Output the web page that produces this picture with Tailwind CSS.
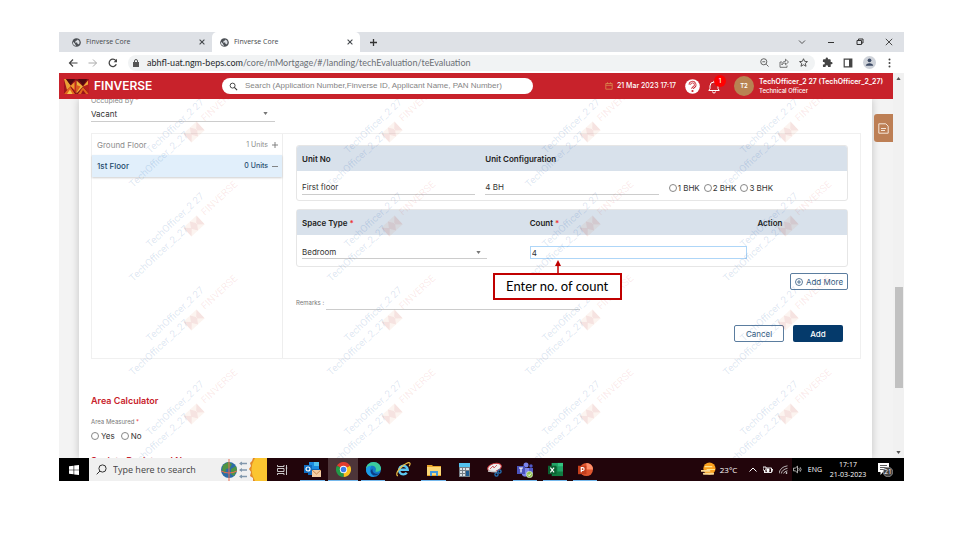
<!DOCTYPE html>
<html lang="en">
<head>
<meta charset="utf-8">
<title>Finverse Core</title>
<script src="https://cdn.jsdelivr.net/npm/@tailwindcss/browser@4"></script>
</head>
<body class="h-screen bg-white pt-8 pb-[59px] pl-[59px] pr-14 overflow-hidden font-['Inter',sans-serif] text-[8px] leading-[10px] text-[#333]">
<svg class="hidden">
  <defs>
    <symbol id="globe" viewBox="0 0 24 24"><circle cx="12" cy="12" r="11.500" fill="#4c5055"/><path d="M3 10l5 5v2l2 1v3A9 9 0 0 1 3 10zM14 4v1l-2 2h-2v2l-2 1v2h6v3h2l2 2 1-1A9 9 0 0 0 14 4z" fill="#dee1e6"/></symbol>
    <symbol id="cross" viewBox="0 0 10 10"><path d="M1 1l8 8M9 1L1 9" stroke="currentColor" fill="none"/></symbol>
    <symbol id="lens" viewBox="0 0 20 20"><circle cx="8" cy="8" r="5.5" fill="none" stroke="currentColor" stroke-width="2"/><path d="M12 12l6 6" stroke="currentColor" stroke-width="2.4"/></symbol>
    <symbol id="caret" viewBox="0 0 6 4"><path d="M0 0h6L3 4z" fill="currentColor"/></symbol>
    <g id="mark">
      <g fill="#1f5fae" fill-opacity=".17" font-family="Roboto" font-size="10">
        <text transform="translate(22 64) rotate(-43)">TechOfficer_2 27</text>
        <text transform="translate(5 98) rotate(-43)">TechOfficer_2_27</text>
      </g>
      <text transform="translate(77 32) rotate(-43)" fill="#d2222b" fill-opacity=".1" font-family="Roboto" font-size="10">FINVERSE</text>
      <g transform="translate(66 42) rotate(-43)" fill-opacity=".07"><path d="M-9-6H9V6H-9z" fill="#d9622b"/><path d="M-9-6l6 6-6 6zM9-6L3 0l6 6zM0-6l4 6-4 6-4-6z" fill="#b01018"/></g>
    </g>
  </defs>
</svg>
<div class="h-full flex flex-col">

  <!-- Browser tabs -->
  <div class="h-5 shrink-0 flex items-center bg-[#dee1e6] font-['Open_Sans',sans-serif] text-[7px] text-[#45494d]">
    <div class="w-[153px] flex items-center gap-[5px] pl-[13px] pr-[7px]">
      <svg class="size-[9px]"><use href="#globe"/></svg><span class="flex-1">Finverse Core</span>
      <button aria-label="Close tab"><svg class="size-[6px] block" stroke-width="1.8"><use href="#cross"/></svg></button>
    </div>
    <div class="w-[148px] h-full flex items-center gap-[5px] pl-2 pr-[7px] bg-white rounded-t-[5px]">
      <svg class="size-[9px]"><use href="#globe"/></svg><span class="flex-1">Finverse Core</span>
      <button aria-label="Close tab"><svg class="size-[6px] block" stroke-width="1.8"><use href="#cross"/></svg></button>
    </div>
    <button aria-label="New tab" class="ml-[9px]"><svg class="size-[9px] block" viewBox="0 0 9 9"><path d="M4.5 1v7M1 4.5h7" stroke="#333" stroke-width="1.3"/></svg></button>
    <div class="ml-auto flex items-center gap-[21px] pr-[11px] text-[#333]">
      <button aria-label="Search tabs"><svg class="size-2 block" viewBox="0 0 8 8"><path d="M1 2.500l3 3 3-3" fill="none" stroke="#444" stroke-width=".9"/></svg></button>
      <button aria-label="Minimize"><svg class="size-2 block" viewBox="0 0 8 8"><path d="M1 4.500h6" stroke="#333"/></svg></button>
      <button aria-label="Restore"><svg class="size-2 block" viewBox="0 0 8 8"><path d="M1 2.500h4.500v4H1zM2.500 2.500v-1.500H7v4H5.500" fill="none" stroke="#333"/></svg></button>
      <button aria-label="Close"><svg class="size-2 block" stroke-width="1.1"><use href="#cross"/></svg></button>
    </div>
  </div>

  <!-- Address bar -->
  <div class="h-[21px] shrink-0 flex items-center bg-white pl-[9px] pr-[11px] text-[#555]">
    <div class="flex items-center gap-[10px]">
      <button aria-label="Back"><svg class="size-[10px] block" viewBox="0 0 10 10"><path d="M9.500 5H1.500M5 1.500L1.500 5 5 8.500" fill="none" stroke="#444" stroke-width="1.200"/></svg></button>
      <button aria-label="Forward"><svg class="size-[10px] block" viewBox="0 0 10 10"><path d="M.5 5h8M5 1.500L8.500 5 5 8.500" fill="none" stroke="#aaa"/></svg></button>
      <button aria-label="Reload"><svg class="size-[10px] block" viewBox="0 0 10 10"><path d="M8.300 6.200A3.700 3.700 0 1 1 7.800 2.600L8.500 3.500" fill="none" stroke="#444" stroke-width="1.300"/><path d="M9 .8v3.400H5.600z" fill="#444"/></svg></button>
    </div>
    <div class="ml-[10px] h-4 flex-1 flex items-center rounded-full bg-[#f1f3f4] pl-[5px] pr-[7px]">
      <svg class="w-[6px] h-2" viewBox="0 0 6 8"><path d="M0 3h6v5H0z" fill="#555"/><path d="M1.500 3V2a1.500 1.500 0 0 1 3 0v1" fill="none" stroke="#555"/></svg>
      <div class="ml-2 flex-1 font-['Lato',sans-serif] text-[9px] text-[#6b6f74]"><span class="text-[#25282c]">abhfl-uat.ngm-beps.com</span>/core/mMortgage/#/landing/techEvaluation/teEvaluation</div>
      <div class="flex items-center gap-[10px]">
        <svg class="size-[9px]" viewBox="0 0 10 10" fill="none" stroke="#555"><circle cx="4.200" cy="4.200" r="3.400"/><path d="M7 7l2.500 2.500M2.600 4.200h3.200"/></svg>
        <svg class="size-[10px]" viewBox="0 0 10 10" fill="none" stroke="#666" stroke-width=".9"><path d="M3 4H1v5.300h7V7.500M2.800 7C3 4.500 4.500 3.300 6.500 3.300V1.200L9.500 4 6.500 6.800V5C5 5 3.700 5.500 2.800 7z"/></svg>
        <svg class="size-[9px]" viewBox="0 0 10 10"><path d="M5 .8l1.300 2.900 3.100.3-2.400 2 .8 3.200L5 7.500 2.200 9.200 3 6 .6 4l3.100-.3z" fill="none" stroke="#444"/></svg>
      </div>
    </div>
    <div class="ml-[7px] flex items-center gap-[10px]">
      <svg class="size-[11px]" viewBox="0 0 24 24"><path d="M20.500 11H19V7a2 2 0 0 0-2-2h-4V3.500a2.500 2.500 0 0 0-5 0V5H4a2 2 0 0 0-2 2v3.800h1.500a2.700 2.700 0 0 1 0 5.400H2V20a2 2 0 0 0 2 2h3.800v-1.500a2.700 2.700 0 0 1 5.400 0V22H17a2 2 0 0 0 2-2v-4h1.500a2.500 2.500 0 0 0 0-5z" fill="#444"/></svg>
      <svg class="size-[10px]" viewBox="0 0 10 10"><path d="M1.200 1.200h7.600v7.600H1.200z" fill="none" stroke="#444" stroke-width="1.200"/><path d="M6 1h3v8H6z" fill="#444"/></svg>
      <svg class="size-[13px]" viewBox="0 0 14 14"><circle cx="7" cy="7" r="7" fill="#ced2d9"/><circle cx="7" cy="4.700" r="2" fill="#3c4a64"/><path d="M3 10.500c0-3.700 8-3.700 8 0z" fill="#3c4a64"/></svg>
      <svg class="w-[7px] h-[10px]" viewBox="0 0 7 10" fill="#444"><circle cx="3.500" cy="1.500" r="1"/><circle cx="3.500" cy="5" r="1"/><circle cx="3.500" cy="8.500" r="1"/></svg>
    </div>
  </div>

  <!-- Page viewport -->
  <div class="flex-1 min-h-0 flex">
    <div class="flex-1 min-w-0 flex flex-col">
      <header class="h-[26px] shrink-0 bg-[#c8222b] flex items-center pl-[5px] pr-[7px] text-white">
        <svg class="w-[25px] h-[15px]" viewBox="0 0 50 30"><path d="M0 0h50v30H0z" fill="#7e0f17"/><path d="M0 0l12 14L0 30z" fill="#a3161c"/><path d="M0 0h4l10 14L6 22z" fill="#e9a136"/><path d="M0 30l12-15 10 15z" fill="#e2661f"/><path d="M6 30l6-9 5 9z" fill="#f6c74f"/><path d="M4 0h18l-9 12z" fill="#4f090f"/><path d="M13 14L24 2v27z" fill="#c4291d"/><path d="M13 14l8-8v16z" fill="#ef9a2f"/><path d="M25 3l13 12-13 14z" fill="#f0b23c"/><path d="M25 12l8 3-8 12z" fill="#dd5a20"/><path d="M28 0h18l-8 13z" fill="#4f090f"/><path d="M28 30l10-14 12 14z" fill="#e2661f"/><path d="M34 30l4-8 6 8z" fill="#9c141a"/><path d="M38 15L50 0v30z" fill="#b8201d"/><path d="M38 15l10-12v8z" fill="#f0a838"/></svg>
        <span class="ml-[5px] w-[128px] text-[12px] font-semibold">FINVERSE</span>
        <div class="w-[311px] h-4 flex items-center rounded-full bg-white pl-[7px]">
          <svg class="size-[9px] text-[#333]"><use href="#lens"/></svg>
          <input aria-label="Search" type="search" placeholder="Search (Application Number,Finverse ID, Applicant Name, PAN Number)" class="ml-[7px] flex-1 min-w-0 outline-none font-['Liberation_Sans',sans-serif] text-[8px] text-[#333] placeholder:text-[#858585]">
        </div>
        <div class="ml-auto flex items-center">
          <svg class="size-2" viewBox="0 0 8 8" fill="none" stroke="#d98e4e" stroke-width=".8"><path d="M.8 1.500h6.400v5.700H.8zM.8 3.300h6.400M2.500.3v1.500M5.500.3v1.500"/></svg>
          <span class="ml-1 w-[68px] text-[7px] font-medium">21 Mar 2023 17:17</span>
          <button aria-label="Help"><svg class="size-[15px] block" viewBox="0 0 15 15"><circle cx="7.500" cy="7.500" r="7.300" fill="#fff"/><path d="M4.800 5.700a2.700 2.700 0 1 1 4 2.400c-.9.500-1.300.9-1.300 2" fill="none" stroke="#c8222b" stroke-width="2.400"/><path d="M4.800 5.700a2.700 2.700 0 1 1 4 2.400c-.9.500-1.300.9-1.300 2" fill="none" stroke="#fff" stroke-width=".9"/><circle cx="7.500" cy="12" r="1.100" fill="#c8222b"/></svg></button>
          <button aria-label="Notifications" class="relative ml-2">
            <svg class="w-3 h-[15px] block" viewBox="0 0 12 15" fill="none" stroke="#fff"><path d="M.8 11.500h10.400L10 9.500V7a4 4 0 0 0-8 0v2.500zM4.500 12.500a1.500 1.500 0 0 0 3 0M6 3V1.800"/></svg>
            <span class="absolute left-[6px] -top-[4px] size-3 rounded-full bg-[#f00] text-[6px] leading-3 text-center font-medium">1</span>
          </button>
          <span class="ml-[14px] size-5 rounded-full bg-[#b88353] text-[6px] leading-5 text-center font-semibold">T2</span>
          <div class="ml-[5px] w-[127px] whitespace-nowrap"><div class="text-[7px] font-semibold leading-[10px]">TechOfficer_2 27 (TechOfficer_2_27)</div><div class="text-[6px] font-medium leading-[8px]">Technical Officer</div></div>
        </div>
      </header>

      <div class="relative flex-1 min-h-0 overflow-hidden bg-[#f3f3f3] pl-5 pr-[21px]">
        <main class="h-full bg-white shadow-[0_0_8px_#0003] pl-3 pr-[11px]">
          <div class="relative -top-[3px]">
            <label for="occ" class="block text-[7px] leading-[10px] text-[#888]">Occupied By <span class="text-[#e33]">*</span></label>
            <div class="w-[184px] h-4 flex items-center border-b border-[#ccc]">
              <select id="occ" class="flex-1 appearance-none outline-none"><option>Vacant</option></select>
              <svg class="w-[5px] h-[3px] mr-[7px] text-[#777]" viewBox="0 0 6 4"><use href="#caret"/></svg>
            </div>
          </div>

          <section class="mt-2 flex border border-[#f0f0f0]">
            <div class="w-[191px] shrink-0 border-r border-[#eee]">
              <button class="w-full h-[21px] flex items-center px-1 pl-[5px] text-[#8d8d8d]"><span class="flex-1 text-left">Ground Floor</span><span class="text-[7px]">1 Units</span><svg class="ml-1 size-[6px]" viewBox="0 0 6 6"><path d="M3 0v6M0 3h6" stroke="#777" stroke-width=".9"/></svg></button>
              <button class="w-full h-[22px] flex items-center px-1 pl-[5px] bg-[#e1effb] shadow-[0_1px_2px_#0003] font-medium text-[#234a6c]"><span class="flex-1 text-left">1st Floor</span><span class="text-[7px]">0 Units</span><svg class="ml-1 size-[6px]" viewBox="0 0 6 6"><path d="M0 3.500h6" stroke="#777" stroke-width=".9"/></svg></button>
            </div>
            <div class="flex-1 min-w-0 pl-[13px] pr-3 pt-[11px] pb-4">
              <div class="border border-[#e6e6e6] rounded-[3px] overflow-hidden">
                <table class="w-full table-fixed">
                  <thead><tr class="h-[25px] bg-[#d8e1eb] text-left"><th class="px-[5px] font-semibold text-[#222]">Unit No</th><th class="px-[5px] font-semibold text-[#222]">Unit Configuration</th><th></th></tr></thead>
                  <tbody><tr class="h-[29px]">
                    <td class="px-[5px] pt-1"><input aria-label="Unit No" value="First floor" class="block w-full h-[14px] outline-none border-b border-[#ccc]"></td>
                    <td class="px-[5px] pt-1"><input aria-label="Unit Configuration" value="4 BH" class="block w-full h-[14px] outline-none border-b border-[#ccc]"></td>
                    <td class="px-[5px] pt-1"><div class="flex gap-1 whitespace-nowrap">
                      <label class="flex items-center gap-px"><input type="radio" name="bhk" class="appearance-none size-2 rounded-full border border-[#888]">1 BHK</label>
                      <label class="flex items-center gap-px"><input type="radio" name="bhk" class="appearance-none size-2 rounded-full border border-[#888]">2 BHK</label>
                      <label class="flex items-center gap-px"><input type="radio" name="bhk" class="appearance-none size-2 rounded-full border border-[#888]">3 BHK</label>
                    </div></td>
                  </tr></tbody>
                </table>
              </div>

              <div class="mt-2 border border-[#e6e6e6] rounded-[3px]">
                <table class="w-full table-fixed">
                  <colgroup><col class="w-[41.4%]"><col class="w-[41.4%]"><col></colgroup>
                  <thead><tr class="h-[25px] bg-[#d8e1eb] text-left"><th class="px-[5px] font-semibold text-[#222]">Space Type <span class="text-[#e33]">*</span></th><th class="px-[5px] font-semibold text-[#222]">Count <span class="text-[#e33]">*</span></th><th class="px-[5px] font-semibold text-[#222]">Action</th></tr></thead>
                  <tbody><tr class="h-[31px]">
                    <td class="px-[5px] pt-1"><div class="w-[185px] h-[13px] flex items-center border-b border-[#ccc]"><select aria-label="Space Type" class="flex-1 appearance-none outline-none"><option>Bedroom</option></select><svg class="w-[5px] h-[3px] mr-[6px] text-[#777]" viewBox="0 0 6 4"><use href="#caret"/></svg></div></td>
                    <td class="px-[5px] pt-1"><div class="relative">
                      <input aria-label="Count" value="4" class="block w-full h-[13px] outline-none border border-[#aed6f8] px-px">
                      <div class="absolute z-10 -left-[37px] top-[14px] w-[129px]">
                        <svg class="block ml-[61px] w-2 h-[14px]" viewBox="0 0 8 14"><path d="M4 4v10" stroke="#c00000" stroke-width="1.500"/><path d="M4 0l3 6H1z" fill="#c00000"/></svg>
                        <div class="-mt-px h-[27px] border-2 border-[#c00000] bg-white text-center whitespace-nowrap font-['Lato',sans-serif] text-[13px] leading-[23px] text-black">Enter no. of count</div>
                      </div>
                    </div></td>
                    <td></td>
                  </tr></tbody>
                </table>
              </div>

              <div class="mt-[6px] flex justify-end"><button class="h-[17px] w-[58px] flex items-center justify-center gap-[3px] whitespace-nowrap border border-[#5b7d9f] rounded-[2px] text-[#345b80]"><svg class="size-2" viewBox="0 0 8 8" fill="none" stroke="#345b80" stroke-width=".8"><circle cx="4" cy="4" r="3.500"/><path d="M4 2v4M2 4h4"/></svg>Add More</button></div>
              <div class="mt-[6px] flex items-center"><label for="remarks" class="w-[30px] text-[6px] text-[#777] whitespace-nowrap">Remarks :</label><input id="remarks" class="w-[254px] h-[14px] outline-none border-b border-[#ccc]"></div>
              <div class="mt-[15px] pr-[5px] flex justify-end gap-[9px]"><button class="w-[50px] h-[17px] border border-[#5b7d9f] rounded-[2px] text-[#345b80]">Cancel</button><button class="w-[50px] h-[17px] rounded-[2px] bg-[#053a6b] text-white font-medium">Add</button></div>
            </div>
          </section>

          <h2 class="mt-9 text-[9px] leading-[11px] font-semibold text-[#c8222b]">Area Calculator</h2>
          <fieldset>
            <legend class="mt-3 text-[6px] leading-[8px] text-[#777] float-left w-full">Area Measured <span class="text-[#e33]">*</span></legend>
            <div class="pt-[5px] clear-both flex gap-[6px]">
              <label class="flex items-center gap-[2px]"><input type="radio" name="area" class="appearance-none size-2 rounded-full border border-[#888]">Yes</label>
              <label class="flex items-center gap-[2px]"><input type="radio" name="area" class="appearance-none size-2 rounded-full border border-[#888]">No</label>
            </div>
          </fieldset>
          <h2 class="mt-[14px] text-[9px] leading-[11px] font-semibold text-[#c8222b]">Society Registered No</h2>
        </main>
        <svg class="absolute inset-0 w-full h-full pointer-events-none" aria-hidden="true">
          <g transform="translate(69 -9)">
            <use href="#mark"/><use href="#mark" x="198"/><use href="#mark" x="396"/><use href="#mark" x="594"/>
            <use href="#mark" y="94"/><use href="#mark" x="198" y="94"/><use href="#mark" x="396" y="94"/><use href="#mark" x="594" y="94"/>
            <use href="#mark" y="188"/><use href="#mark" x="198" y="188"/><use href="#mark" x="396" y="188"/><use href="#mark" x="594" y="188"/>
            <use href="#mark" y="282"/><use href="#mark" x="198" y="282"/><use href="#mark" x="396" y="282"/><use href="#mark" x="594" y="282"/>
          </g>
        </svg>
        <button aria-label="Notes" class="absolute right-0 top-[15px] w-[19px] h-7 rounded-l-[3px] bg-[#bd7f55] flex items-center justify-center"><svg class="size-[11px]" viewBox="0 0 11 11" fill="none" stroke="#f5e6da"><path d="M.8.8h7l2.400 2.400v7H.8zM3 5.500h5M3 7.500h4"/></svg></button>
      </div>
    </div>
    <div class="w-[11px] shrink-0 bg-[#f1f1f1] flex flex-col items-center py-1 text-[#555]">
      <svg class="w-[5px] h-[3px] rotate-180 shrink-0" viewBox="0 0 6 4"><use href="#caret"/></svg>
      <div class="w-2 grow-[207]"></div><div class="w-2 grow-[101] bg-[#c1c1c1]"></div><div class="w-2 grow-[63]"></div>
      <svg class="w-[5px] h-[3px] shrink-0" viewBox="0 0 6 4"><use href="#caret"/></svg>
    </div>
  </div>

  <!-- Taskbar -->
  <footer class="h-[23px] shrink-0 flex bg-[#22050b] text-white font-['Open_Sans',sans-serif]">
    <button aria-label="Start" class="w-[30px] bg-black flex items-center justify-center"><svg class="size-[10px]" viewBox="0 0 10 10"><path d="M0 1.300L4.600.7v4H0zM5.200.6L10 0v4.700H5.200zM0 5.300h4.600v4L0 8.700zM5.200 5.300H10V10l-4.800-.6z" fill="#fff"/></svg></button>
    <div class="w-[178px] bg-[#f0f0f0] flex items-center pl-[7px]">
      <svg class="size-[11px] text-[#333]" viewBox="0 0 11 11" fill="none" stroke="currentColor"><circle cx="6.500" cy="4.500" r="3.600"/><path d="M4 7L.7 10.300"/></svg>
      <input aria-label="Type here to search" placeholder="Type here to search" class="ml-[6px] w-[106px] outline-none text-[9px] placeholder:text-[#444]">
      <svg class="w-[48px] h-[23px]" viewBox="0 0 48 23"><circle cx="10" cy="12" r="8" fill="#2b6ca8"/><path d="M4 7l5-3 4 2-2 4-4 1-1 5-3-4zM12 11l5-3 1 4-3 6-3-2z" fill="#4f9443"/><path d="M10 1v22M2 13q8 4 16 0" stroke="#e86d53" fill="none"/><path d="M21 5.500h7M21 12h7M21 18.500h7" stroke="#8298ad" stroke-width="1.300"/><path d="M20 5.500l3-2v4zM20 12l3-2v4zM20 18.500l3-2v4z" fill="#8298ad"/><path d="M48 0H34l-1 3-2 2 1 3-2 3 2 3-1 4 3 2v3h14z" fill="#e2892a"/><path d="M48 0H36q-7 11 0 23h12z" fill="#fbc531"/></svg>
    </div>
    <nav class="flex">
      <button aria-label="Task view" class="w-[30px] flex items-center justify-center"><svg class="w-[11px] h-[10px]" viewBox="0 0 11 10" fill="none" stroke="#ddd" stroke-width=".9"><path d="M.5 0v1.500h6.500V0M.5 10V8.500H7V10M.5 3.500H7v3H.5zM9.500 0v10M8.700 3h1.600"/></svg></button>
      <button aria-label="Outlook" class="w-[31px] flex items-center justify-center relative"><svg class="size-[17px]" viewBox="0 0 17 17"><path d="M5 1h10v8H5z" fill="#1b8be0"/><path d="M10 1h5v4h-5z" fill="#50c3f0"/><path d="M4 8h12v6H4z" fill="#1066b5"/><path d="M0 4h8v8H0z" fill="#0f6cc0"/><circle cx="4" cy="8" r="2" fill="none" stroke="#fff" stroke-width="1.200"/><path d="M8 9h9v7H8z" fill="#f4cfa4"/><path d="M8 9l4.500 4L17 9" fill="none" stroke="#ca8d50"/></svg><i class="absolute bottom-0 inset-x-[3px] h-px bg-[#76b9ed]"></i></button>
      <button aria-label="Chrome" class="w-[30px] flex items-center justify-center relative bg-[#4d3539]"><svg class="size-[15px]" viewBox="0 0 16 16"><path d="M8 8L1.070 4A8 8 0 0 1 14.930 4z" fill="#e33b2e"/><path d="M8 8l6.930-4A8 8 0 0 1 8 16z" fill="#fcc31e"/><path d="M8 8v8A8 8 0 0 1 1.070 4z" fill="#229a48"/><circle cx="8" cy="8" r="3.900" fill="#fff"/><circle cx="8" cy="8" r="3" fill="#3b7ded"/></svg><i class="absolute bottom-0 inset-x-0 h-px bg-[#76b9ed]"></i></button>
      <button aria-label="Edge" class="w-[30px] flex items-center justify-center relative"><svg class="size-[15px]" viewBox="0 0 16 16"><circle cx="8" cy="8" r="8" fill="#147bc9"/><path d="M0 8C0 3 4 0 8 0c5 0 8 3.500 8 7 0 3-4 4-6 3 2-4-1-6-4-6-3 0-5 2-6 4z" fill="#3ccb9c"/><path d="M0 8C1 5 3 4 6 4c-3 3-2 9 3 12C4 16 0 13 0 8z" fill="#1b9be6"/><path d="M7 7c-1 4 3 7 7 5-3 4-9 2-9-2 0-1 1-2 2-3z" fill="#0d3d82"/></svg><i class="absolute bottom-0 inset-x-[3px] h-px bg-[#76b9ed]"></i></button>
      <button aria-label="Internet Explorer" class="w-[30px] flex items-center justify-center"><svg class="size-[15px]" viewBox="0 0 16 16" fill="none"><path d="M3.500 8.300h9A4.600 4.600 0 1 0 11.500 11.500" stroke="#5dc8f2" stroke-width="2.600"/><path d="M2 15C-2 13 5 4 11 1.500c4-2 5 0 3 3" stroke="#f5c445" stroke-width="1.200"/></svg></button>
      <button aria-label="File Explorer" class="w-[31px] flex items-center justify-center relative"><svg class="w-[14px] h-3" viewBox="0 0 14 12"><path d="M0 1h5l1 1h8v10H0z" fill="#e8a52a"/><path d="M0 3h14v8H0z" fill="#fcd875"/><path d="M3 12V7h8v5H9V9H5v3z" fill="#4598dc"/></svg><i class="absolute bottom-0 inset-x-[3px] h-px bg-[#76b9ed]"></i></button>
      <button aria-label="Calculator" class="w-[30px] flex items-center justify-center"><svg class="w-[11px] h-[14px]" viewBox="0 0 11 14"><path d="M0 0h11v14H0z" fill="#777f86"/><path d="M0 0h11v4H0z" fill="#53c2ee"/><path d="M1 5h2v2H1zM4 5h2v2H4zM7 5h3v2H7zM1 8h2v2H1zM4 8h2v2H4zM1 11h2v2H1zM4 11h2v2H4z" fill="#dce2e6"/><path d="M7 8h3v5H7z" fill="#1e5b91"/></svg></button>
      <button aria-label="Snipping Tool" class="w-[31px] flex items-center justify-center"><svg class="size-[15px]" viewBox="0 0 15 15"><ellipse cx="7.500" cy="5.500" rx="7" ry="4" transform="rotate(-15 7.500 5.500)" fill="#eee" stroke="#c9363b"/><path d="M3 7l3-3 1 2 3-3" fill="none" stroke="#d06064"/><path d="M1 9l9 1" stroke="#ccc" stroke-width="1.500"/><g fill="none" stroke="#2474b8" stroke-width="1.300"><circle cx="9.500" cy="12.500" r="1.600"/><circle cx="12.500" cy="9.500" r="1.600"/></g></svg></button>
      <button aria-label="Teams" class="w-[30px] flex items-center justify-center relative"><svg class="size-4" viewBox="0 0 16 16"><circle cx="9" cy="3" r="2.500" fill="#7b83eb"/><circle cx="14" cy="4" r="1.700" fill="#5059c9"/><path d="M5 6h7v6a4 4 0 0 1-7 1z" fill="#7b83eb"/><path d="M12 6h4v5a3 3 0 0 1-4 2z" fill="#5059c9"/><path d="M0 4h8v8H0z" fill="#4b53bc"/><path d="M2 6h4M4 6v4.500" stroke="#fff" stroke-width="1.200"/><circle cx="12.500" cy="12.500" r="3.200" fill="#92c353" stroke="#fff" stroke-width=".5"/><path d="M11 12.500l1.200 1.200L14 11.500" fill="none" stroke="#fff"/></svg><i class="absolute bottom-0 inset-x-[3px] h-px bg-[#76b9ed]"></i></button>
      <button aria-label="Excel" class="w-[30px] flex items-center justify-center relative"><svg class="size-[15px]" viewBox="0 0 16 16"><path d="M4 1h12v14H4z" fill="#107c41"/><path d="M10 1h6v4h-6z" fill="#33c481"/><path d="M4 1h6v4H4zM10 5h6v5h-6z" fill="#21a366"/><path d="M0 4h9v9H0z" fill="#0b6132"/><path d="M2.500 6l4 5M6.500 6l-4 5" stroke="#fff" stroke-width="1.200"/></svg><i class="absolute bottom-0 inset-x-[3px] h-px bg-[#76b9ed]"></i></button>
      <button aria-label="PowerPoint" class="w-[30px] flex items-center justify-center relative"><svg class="size-[15px]" viewBox="0 0 16 16"><circle cx="9" cy="8" r="7" fill="#e0562f"/><path d="M9 1a7 7 0 0 1 7 7H9z" fill="#ff8f6b"/><path d="M0 4h9v9H0z" fill="#c43e1c"/><path d="M3.500 11V6H5a1.500 1.500 0 0 1 0 3H3.500" fill="none" stroke="#fff" stroke-width="1.200"/></svg><i class="absolute bottom-0 inset-x-[3px] h-px bg-[#76b9ed]"></i></button>
    </nav>
    <div class="ml-auto flex items-center text-[8px]">
      <svg class="size-[15px]" viewBox="0 0 16 16"><circle cx="9" cy="7" r="6.500" fill="#f9a01e"/><path d="M4 5h8M6 8h9" stroke="#ffe28a" stroke-width="1.300"/><path d="M0 9.500h9M3 12.500h10" stroke="#f8d794" stroke-width="2" stroke-linecap="round"/></svg>
      <span class="ml-1 w-[29px]">23°C</span>
      <div class="flex items-center gap-[6px]">
        <svg class="w-2 h-[5px]" viewBox="0 0 8 5"><path d="M.5 4.500L4 1l3.500 3.500" fill="none" stroke="#fff"/></svg>
        <svg class="w-[10px] h-2" viewBox="0 0 10 8" fill="none" stroke="#fff" stroke-width=".9"><path d="M3 2h5.500v4.500H2V5M8.500 3.500H10v1.500H8.500M0 1h3v2a1.500 1.500 0 0 1-3 0zM1.500 4v3"/><path d="M4 3h2v2.500H4z" fill="#fff"/></svg>
        <svg class="size-[9px]" viewBox="0 0 9 9" fill="none" stroke="#ddd" stroke-width=".8"><path d="M0 8.500Q1 2 8.500.8M2.300 8.500Q3 4.500 8.500 3.300M4.600 8.500Q5 6.500 8.500 5.800"/><circle cx="7.500" cy="8" r=".6" fill="#fff"/></svg>
      </div>
      <div class="ml-1 self-stretch flex items-center bg-black pl-px">
        <svg class="size-[9px]" viewBox="0 0 10 9" fill="none" stroke="#eee" stroke-width=".8"><path d="M.5 3h2L5 .8v7.400L2.500 6h-2zM6.500 3q1 1.500 0 3M8 2q2 2.500 0 5"/></svg>
        <span class="ml-[6px] text-[7px]">ENG</span>
        <div class="ml-[6px] w-10 text-center text-[7px] leading-[10px] whitespace-nowrap"><div>17:17</div><div>21-03-2023</div></div>
        <svg class="ml-[10px] mr-[11px] w-[15px] h-[14px]" viewBox="0 0 15 14"><path d="M0 0h11v9H5L2.500 12V9H0z" fill="#fff"/><path d="M2 2.500h7M2 4.500h7M2 6.500h4" stroke="#333" stroke-width=".8"/><circle cx="10" cy="9" r="4.800" fill="#444" stroke="#bbb" stroke-width=".6"/><text x="10" y="11.300" text-anchor="middle" font-size="6.500" fill="#fff">21</text></svg>
      </div>
    </div>
  </footer>
</div>
</body>
</html>
